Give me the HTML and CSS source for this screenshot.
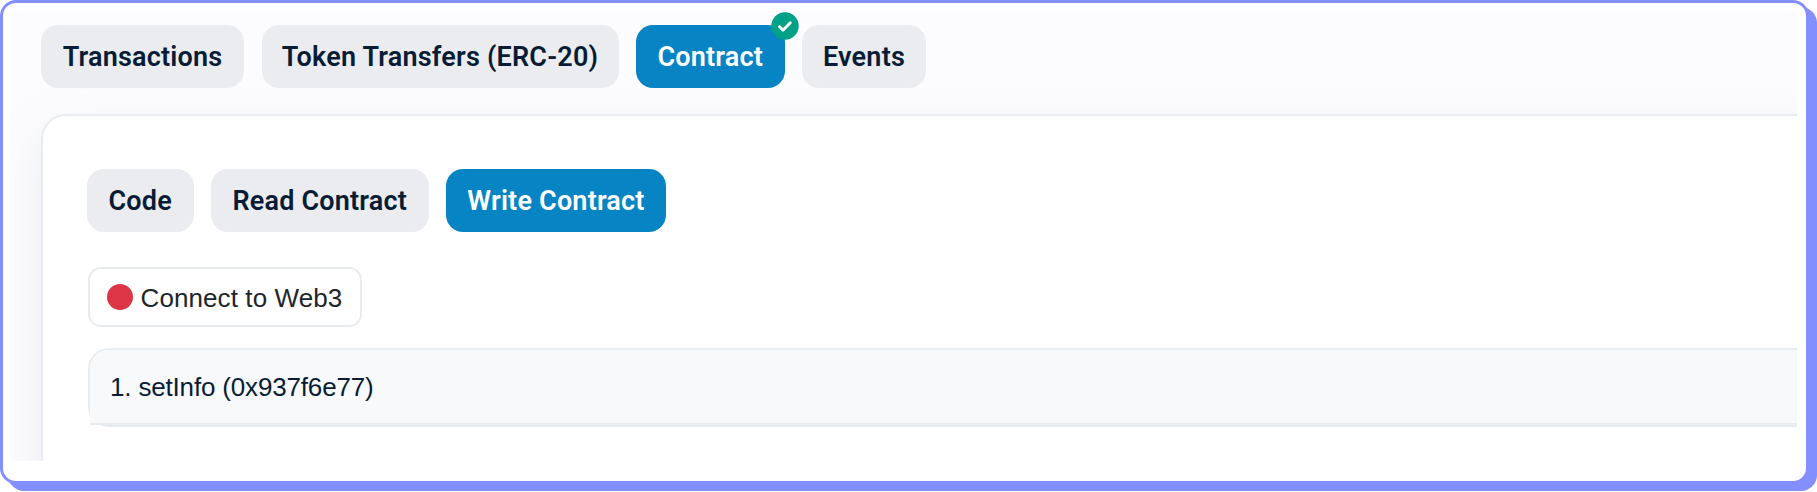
FILE: index.html
```html
<!DOCTYPE html>
<html lang="en">
<head>
<meta charset="utf-8">
<title>Contract</title>
<link rel="stylesheet" href="styles.css">
</head>
<body>
<main class="frame">
  <div class="viewport">
    <nav class="tabs">
      <button class="tab tab-transactions">Transactions</button>
      <button class="tab tab-tokens">Token Transfers (ERC-20)</button>
      <button class="tab tab-contract active">Contract
        <svg class="badge" viewBox="0 0 28 28" aria-hidden="true"><circle cx="14" cy="14" r="13.7" fill="#00a186"/><path d="M8.5 14.7l3.7 3.4 7.1-7.4" fill="none" stroke="#fff" stroke-width="2.9" stroke-linecap="round" stroke-linejoin="round"/></svg>
      </button>
      <button class="tab tab-events">Events</button>
    </nav>
    <section class="card">
      <nav class="subtabs">
        <button class="tab tab-code">Code</button>
        <button class="tab tab-read">Read Contract</button>
        <button class="tab tab-write active">Write Contract</button>
      </nav>
      <button class="connect"><span class="dot"></span><span class="connect-label">Connect to Web3</span></button>
      <div class="method"><div class="method-header"><span class="method-label">1. setInfo (0x937f6e77)</span></div></div>
    </section>
  </div>
</main>
</body>
</html>
```

FILE: styles.css
```css
* { box-sizing: border-box; }
body { height: 492px; margin: 0; background: #fff; overflow: hidden; }
button { margin: 0; padding: 0; border: 0; white-space: nowrap; }
.frame {
  width: 1809px;
  height: 484px;
  padding: 8px 9px 19px 7px;
  border: 3px solid #838eff;
  border-radius: 16px;
  background: #fff;
  box-shadow: 8px 7px 0 #838eff;
}
.viewport {
  width: 1787px;
  height: 450px;
  padding: 14px 0 0 31px;
  overflow: hidden;
  background: #fcfcfe;
}
.tabs, .subtabs { display: flex; gap: 17.5px; }
.tab {
  position: relative;
  height: 63px;
  padding-top: 1px;
  border-radius: 17px;
  background: #ebecf0;
  color: #081d35;
  font: 600 27px/1 Roboto, sans-serif;
  letter-spacing: .2px;
}
.active { background: #0784c3; color: #fff; }
.tab-transactions { width: 203px; }
.tab-tokens { width: 357px; }
.tab-contract { width: 148.5px; }
.tab-events { width: 124px; }
.tab-code { width: 106.5px; }
.tab-read { width: 217.5px; }
.tab-write { width: 220px; }
.badge { position: absolute; top: -13px; right: -14px; width: 28px; height: 28px; }
.card {
  width: 1900px;
  height: 500px;
  margin-top: 26px;
  padding: 53px 0 0 44px;
  border: 2px solid #e9ecef;
  border-radius: 25px;
  background: #fff;
  box-shadow: 0 17px 42px rgba(189, 197, 209, .28);
}
.connect {
  display: flex;
  align-items: center;
  width: 273.5px;
  height: 60px;
  margin: 35px 0 0 1px;
  padding-left: 17px;
  border: 2px solid #e9ecef;
  border-radius: 13px;
  background: #fff;
  color: #212529;
  font: 26px/1 "Liberation Sans", Arial, sans-serif;
  letter-spacing: .1px;
}
.dot { width: 26px; height: 26px; margin-right: 7.5px; border-radius: 50%; background: #dc3545; }
.connect-label { padding-top: 1px; }
.method {
  width: 1850px;
  height: 79px;
  margin: 21px 0 0 1px;
  border: 2px solid #e9ecef;
  border-radius: 21px;
}
.method-header {
  height: 75px;
  padding: 24px 0 0 20px;
  border-bottom: 2px solid #e9ecef;
  border-radius: 19px 19px 0 0;
  background: #f8f9fb;
  color: #081d35;
  font: 26px/1 "Liberation Sans", Arial, sans-serif;
  letter-spacing: -.17px;
}
```
